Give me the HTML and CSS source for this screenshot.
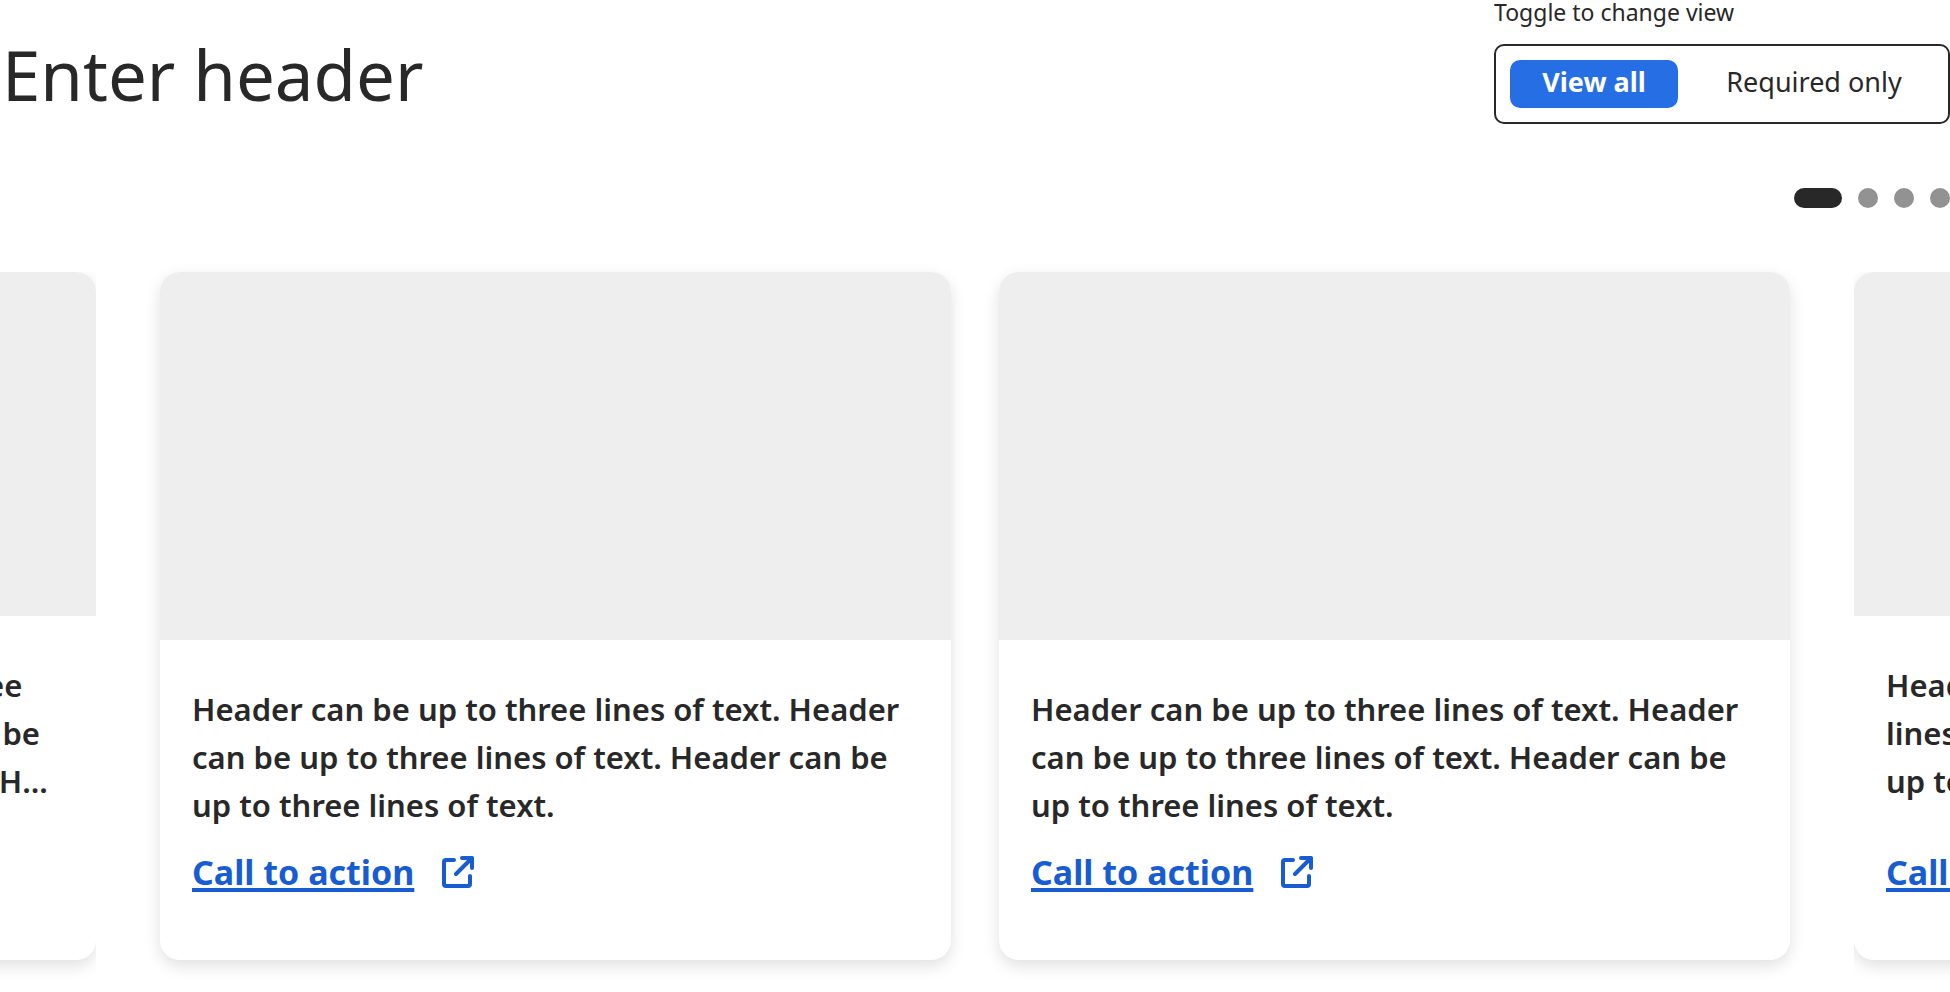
FILE: index.html
```html
<!DOCTYPE html>
<html lang="en">
<head>
<meta charset="utf-8">
<meta name="viewport" content="width=device-width, initial-scale=1">
<title>Enter header</title>
<link rel="stylesheet" href="styles.css">
</head>
<body>
<svg class="sprite" aria-hidden="true">
  <symbol id="external" viewBox="0 0 32 32">
    <path d="M12 4H4a2 2 0 0 0-2 2v22a2 2 0 0 0 2 2h22a2 2 0 0 0 2-2v-8M20 2h10v10M30 2L14 18" fill="none" stroke="currentColor" stroke-width="4" stroke-linecap="round" stroke-linejoin="round"/>
  </symbol>
</svg>
<main class="page">
  <header class="top">
    <h1 class="title">Enter header</h1>
    <div class="switch">
      <span class="switch-label" id="view-label">Toggle to change view</span>
      <div class="switch-box" role="group" aria-labelledby="view-label">
        <button class="option option-on" type="button" aria-pressed="true">View all</button>
        <button class="option option-wide" type="button" aria-pressed="false">Required only</button>
      </div>
    </div>
  </header>
  <nav class="dots" aria-label="Slides">
    <button class="dot dot-on" type="button" aria-label="Slide 1"></button>
    <button class="dot" type="button" aria-label="Slide 2"></button>
    <button class="dot" type="button" aria-label="Slide 3"></button>
    <button class="dot" type="button" aria-label="Slide 4"></button>
  </nav>
  <section class="carousel">
    <div class="peek peek-left">
      <article class="card card-side">
        <div class="media"></div>
        <div class="body">
          <h2 class="heading">Header can be up to three<br>lines of text. Header can be<br>up to three lines of text. H...</h2>
        </div>
      </article>
    </div>
    <div class="slides">
      <article class="card">
        <div class="media"></div>
        <div class="body">
          <h2 class="heading">Header can be up to three lines of text. Header can be up to three lines of text. Header can be up to three lines of text.</h2>
          <a class="cta" href="#"><span class="cta-text">Call to action</span><svg class="icon" aria-hidden="true"><use href="#external"/></svg></a>
        </div>
      </article>
      <article class="card">
        <div class="media"></div>
        <div class="body">
          <h2 class="heading">Header can be up to three lines of text. Header can be up to three lines of text. Header can be up to three lines of text.</h2>
          <a class="cta" href="#"><span class="cta-text">Call to action</span><svg class="icon" aria-hidden="true"><use href="#external"/></svg></a>
        </div>
      </article>
    </div>
    <div class="peek">
      <article class="card card-side">
        <div class="media"></div>
        <div class="body">
          <h2 class="heading">Header can be up to three<br>lines of text. Header can be<br>up to three lines of text. H...</h2>
          <a class="cta" href="#"><span class="cta-text">Call to action</span><svg class="icon" aria-hidden="true"><use href="#external"/></svg></a>
        </div>
      </article>
    </div>
  </section>
</main>
</body>
</html>
```
FILE: styles.css
```css
* { box-sizing: border-box; }
body {
  margin: 0;
  background: #fff;
  color: #282828;
  font-family: "Noto Sans", sans-serif;
  overflow-x: hidden;
}
h1, h2 { margin: 0; }
button { border: 0; padding: 0; font: inherit; color: inherit; cursor: pointer; }
.sprite { display: none; }

.top { display: flex; justify-content: space-between; align-items: flex-start; }
.title { padding: 26px 0 0 2px; font-size: 69px; line-height: 96px; font-weight: 400; }
.switch-label { display: block; font-size: 23px; line-height: 24px; margin-bottom: 20px; }
.switch-box { display: flex; gap: 16px; padding: 14px; border: 2px solid #282828; border-radius: 10px; }
.option { flex: none; min-width: 168px; height: 48px; padding: 0 24px 5px; border-radius: 10px; background: none; font-size: 27px; line-height: 36px; }
.option-wide { min-width: 240px; }
.option-on { background: #266ee3; color: #fff; font-weight: 700; }

.dots { display: flex; justify-content: flex-end; gap: 16px; margin-top: 64px; }
.dot { width: 20px; height: 20px; border-radius: 10px; background: #929292; }
.dot-on { width: 48px; background: #282828; }

.carousel { display: grid; grid-template-columns: 96px minmax(0, 1fr) 96px; gap: 64px; margin-top: 64px; }
.slides { display: grid; grid-template-columns: 1fr 1fr; gap: 48px; padding-bottom: 32px; }
.peek { display: flex; overflow: hidden; padding-bottom: 32px; }
.peek-left { justify-content: flex-end; }
.card { display: flex; flex-direction: column; border-radius: 20px; background: #fff; box-shadow: 0 6px 16px rgba(0, 0, 0, 0.12); }
.card-side { flex: none; width: 500px; }
.media { height: 368px; border-radius: 20px 20px 0 0; background: #eee; }
.card-side .media { height: 344px; }
.body { display: flex; flex-direction: column; flex: 1; padding: 45px 40px 64px 32px; }
.heading { margin-bottom: 19px; font-size: 31px; line-height: 48px; font-weight: 600; }
.cta { display: flex; align-items: center; gap: 28px; margin-top: auto; color: #185cd2; font-size: 34px; line-height: 48px; font-weight: 700; text-decoration: none; }
.cta-text { text-decoration: underline; text-decoration-thickness: 4px; text-underline-offset: 3px; text-decoration-skip-ink: none; }
.icon { width: 32px; height: 32px; overflow: visible; }
```
